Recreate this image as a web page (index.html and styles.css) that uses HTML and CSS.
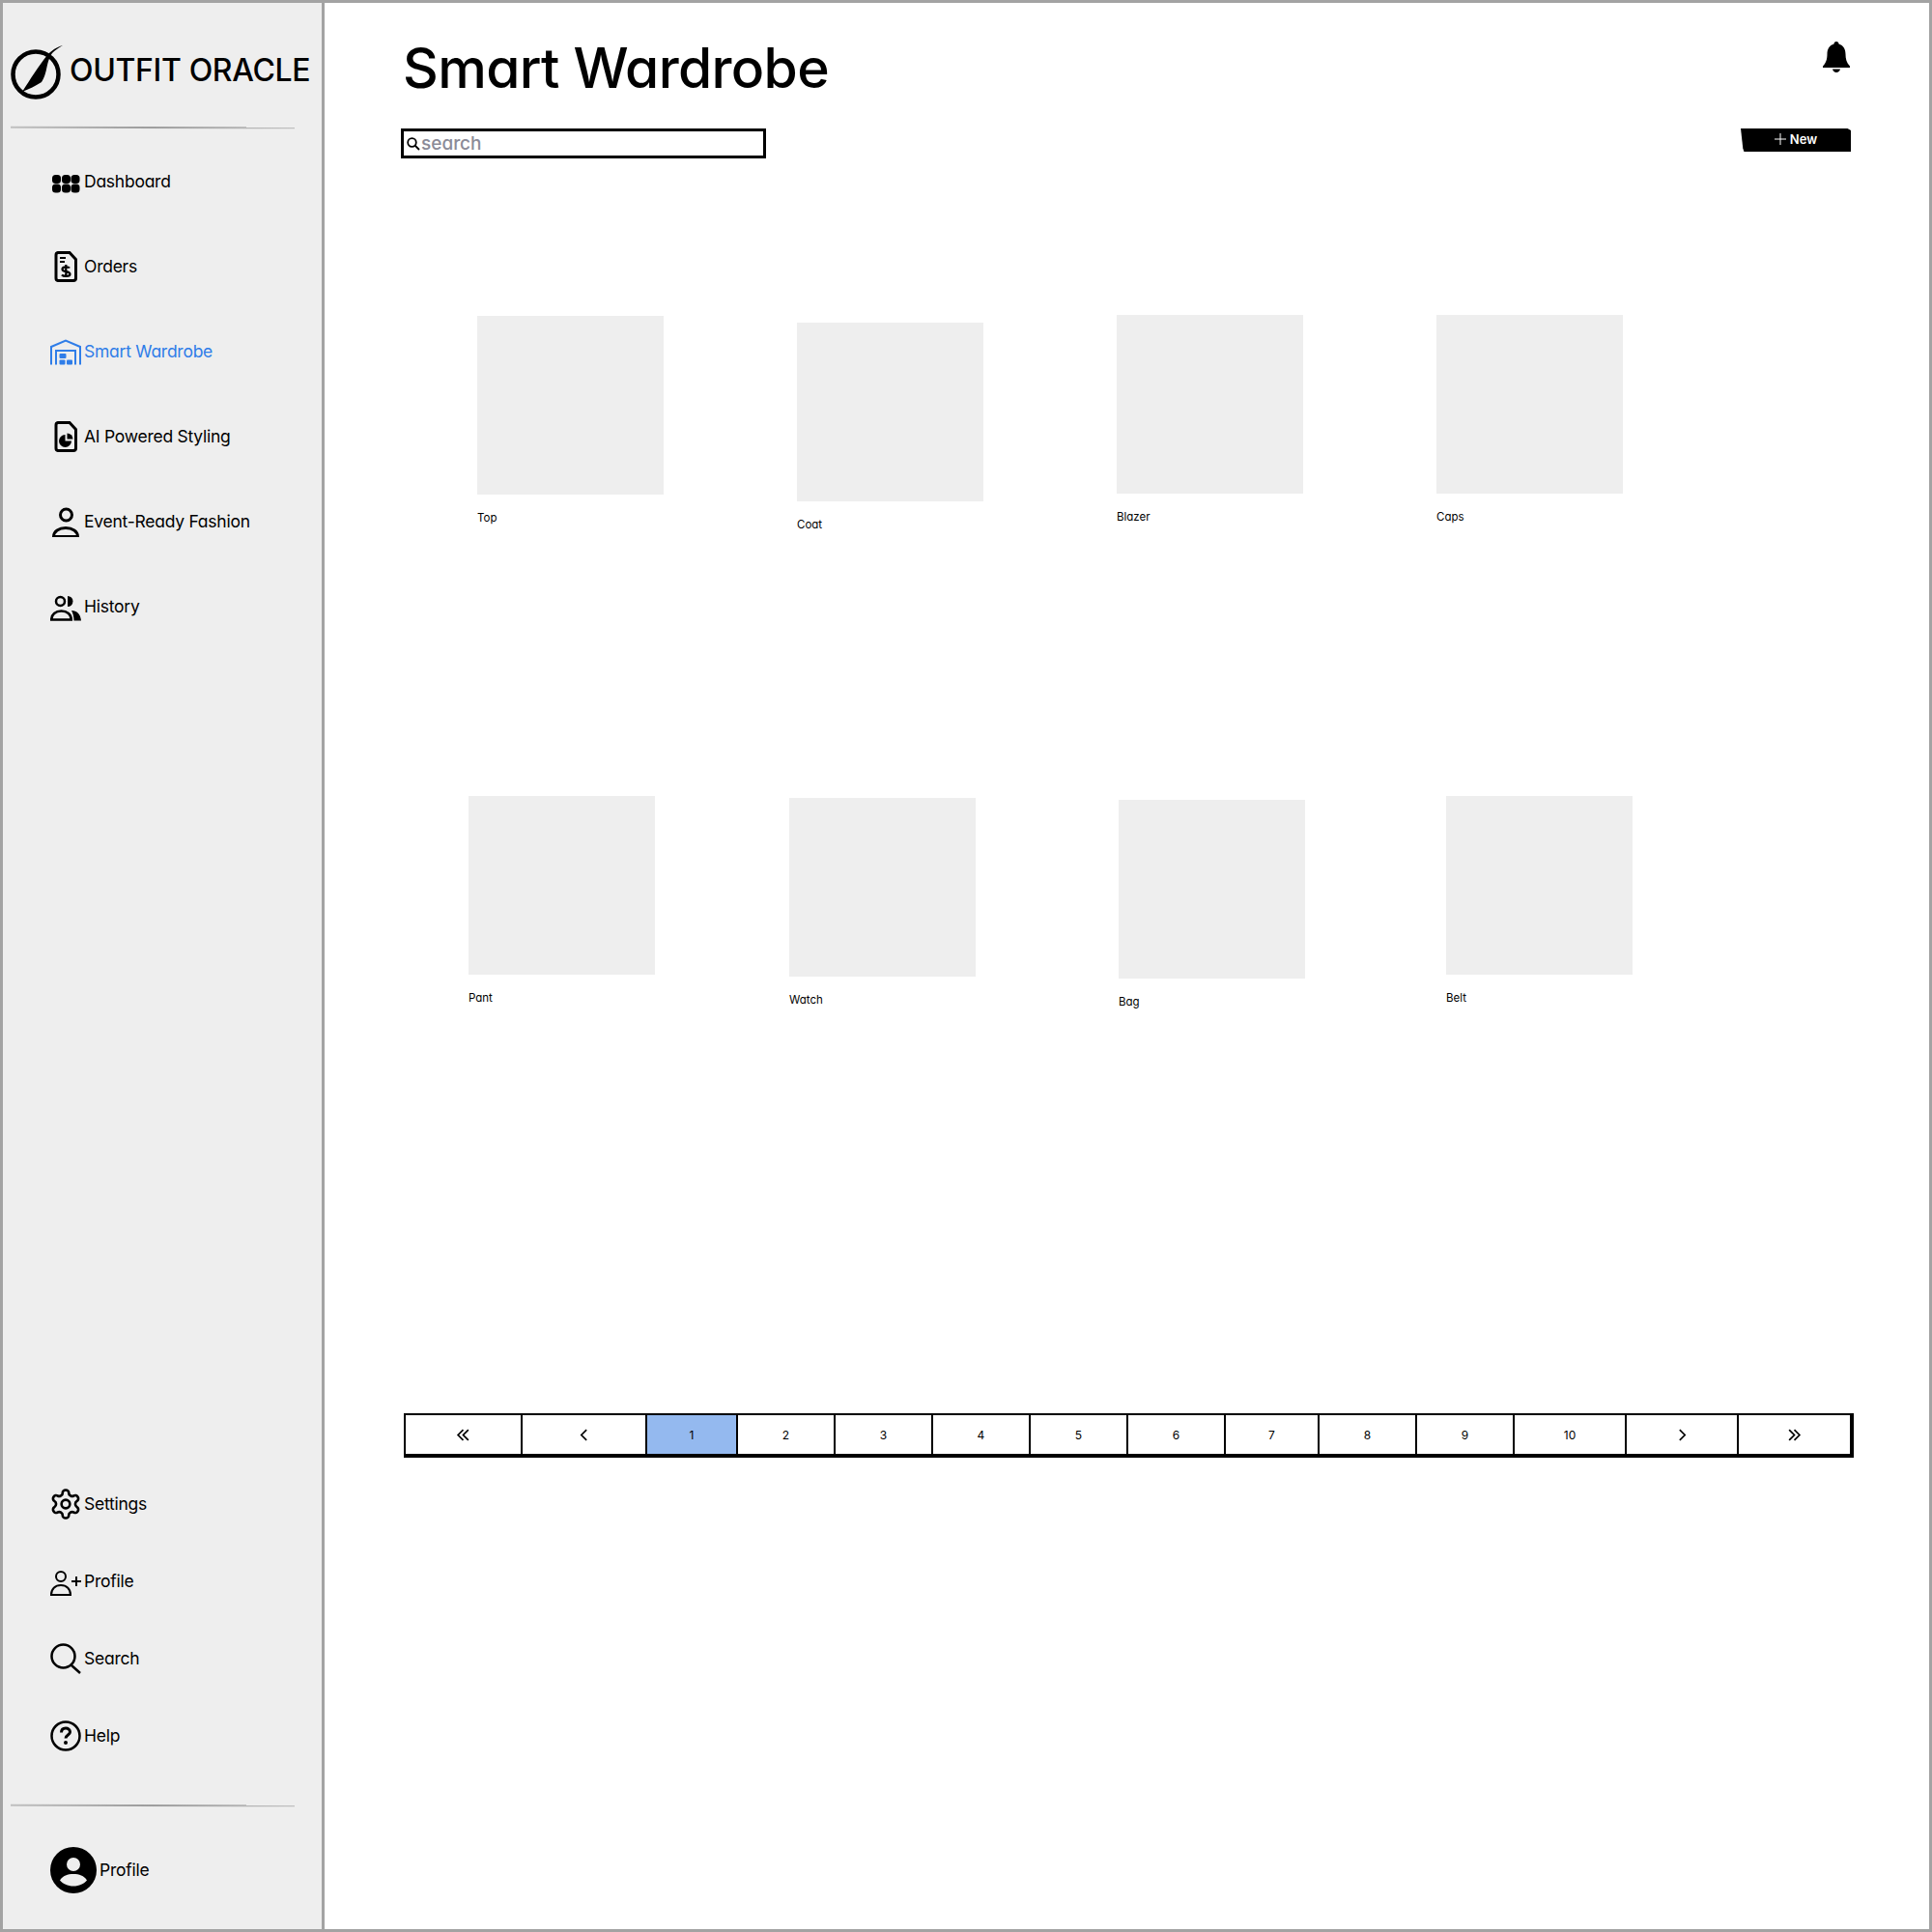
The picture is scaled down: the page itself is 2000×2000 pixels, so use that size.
FILE: index.html
```html
<!DOCTYPE html>
<html lang="en">
<head>
<meta charset="utf-8">
<title>Smart Wardrobe</title>
<link rel="stylesheet" href="styles.css">
</head>
<body>
<div class="app">
  <aside class="sidebar">
    <div class="brand">
      <svg class="logo" viewBox="0 0 54 58"><circle cx="26" cy="31" r="23.500" fill="none" stroke="currentColor" stroke-width="4.500"/><path d="M54 1C47 3 43 6 39 10C33 17 29 23 25 29C20 36 16 43 12 49C19 46 26 43 32 39C35 34 36 30 37 26C38 20 40 13 43 9C46 6 50 3 54 1Z" fill="currentColor"/></svg>
      <span class="brand-name">OUTFIT ORACLE</span>
    </div>
    <div class="rule"></div>
    <nav class="nav">
      <a class="nav-item"><svg class="icon" viewBox="0 0 32 32"><g fill="currentColor"><rect x="2" y="9" width="9" height="9" rx="3.500"/><rect x="12" y="9" width="9" height="9" rx="3.500"/><rect x="21.500" y="9" width="9" height="9" rx="3.500"/><rect x="2" y="18.500" width="9" height="9" rx="3.500"/><rect x="12" y="18.500" width="9" height="9" rx="3.500"/><rect x="21.500" y="18.500" width="9" height="9" rx="3.500"/></g></svg><span>Dashboard</span></a>
      <a class="nav-item"><svg class="icon" viewBox="0 0 32 32"><path d="M8 1.500H20L26.500 8.500V28A2.500 2.500 0 0 1 24 30.500H8A2.500 2.500 0 0 1 6 28V4A2.500 2.500 0 0 1 8 1.500Z" fill="none" stroke="currentColor" stroke-width="3"/><path d="M10 7h6M10 11h5" stroke="currentColor" stroke-width="2"/><path d="M20 17.500c-1-1.500-7.500-2-7.500 1.200 0 3.300 8 1.700 8 5 0 3-7 2.700-8.500.8M16.300 14v13" fill="none" stroke="currentColor" stroke-width="2.200"/></svg><span>Orders</span></a>
      <a class="nav-item nav-item-active"><svg class="icon" viewBox="0 0 32 32"><path d="M1 29.500V11L16 4.500L31 11V29.500" fill="none" stroke="currentColor" stroke-width="2"/><path d="M6 29.500V15H26V29.500" fill="none" stroke="currentColor" stroke-width="2"/><g fill="currentColor"><rect x="9.500" y="18" width="7" height="5" rx="1"/><rect x="9.500" y="24.500" width="6" height="5" rx="1"/><rect x="17" y="24.500" width="6" height="5" rx="1"/></g></svg><span>Smart Wardrobe</span></a>
      <a class="nav-item"><svg class="icon" viewBox="0 0 32 32"><path d="M8 1.500H20L26.500 8.500V28A2.500 2.500 0 0 1 24 30.500H8A2.500 2.500 0 0 1 6 28V4A2.500 2.500 0 0 1 8 1.500Z" fill="none" stroke="currentColor" stroke-width="3"/><path d="M15.500 14V20.500H22A6.500 6.500 0 1 1 15.500 14Z" fill="currentColor"/><path d="M17.500 12.500V18.500H23.500A6 6 0 0 0 17.500 12.500Z" fill="currentColor"/></svg><span>AI Powered Styling</span></a>
      <a class="nav-item"><svg class="icon" viewBox="0 0 32 32"><circle cx="16.500" cy="9" r="6" fill="none" stroke="currentColor" stroke-width="3"/><path d="M3.500 31.500C3.500 26 9 22.500 16 22.500S28.500 26 28.500 31.500Z" fill="none" stroke="currentColor" stroke-width="3"/></svg><span>Event-Ready Fashion</span></a>
      <a class="nav-item"><svg class="icon" viewBox="0 0 32 32"><circle cx="10.500" cy="10.500" r="4.500" fill="none" stroke="currentColor" stroke-width="2.500"/><path d="M18 5A5.500 5.500 0 0 1 18 16Z" fill="currentColor"/><path d="M1.200 29.500C1.200 24 5.500 20.500 11.500 20.500S21.800 24 21.800 29.500Z" fill="none" stroke="currentColor" stroke-width="2.500"/><path d="M22 20C27.500 20 31.500 24 32 30.500H24.500C24.500 26 23.500 23 22 20Z" fill="currentColor"/></svg><span>History</span></a>
    </nav>
    <nav class="nav nav-bottom">
      <a class="nav-item nav-item-short"><svg class="icon" viewBox="1 1 22 22" fill="none" stroke="currentColor" stroke-width="1.800"><path d="M12.220 2h-.44a2 2 0 0 0-2 2v.18a2 2 0 0 1-1 1.730l-.43.25a2 2 0 0 1-2 0l-.15-.08a2 2 0 0 0-2.730.73l-.22.38a2 2 0 0 0 .73 2.730l.15.1a2 2 0 0 1 1 1.720v.51a2 2 0 0 1-1 1.740l-.15.09a2 2 0 0 0-.73 2.730l.22.38a2 2 0 0 0 2.730.73l.15-.08a2 2 0 0 1 2 0l.43.25a2 2 0 0 1 1 1.730V20a2 2 0 0 0 2 2h.44a2 2 0 0 0 2-2v-.18a2 2 0 0 1 1-1.730l.43-.25a2 2 0 0 1 2 0l.15.08a2 2 0 0 0 2.730-.73l.22-.39a2 2 0 0 0-.73-2.730l-.15-.08a2 2 0 0 1-1-1.740v-.5a2 2 0 0 1 1-1.740l.15-.09a2 2 0 0 0 .73-2.730l-.22-.38a2 2 0 0 0-2.730-.73l-.15.08a2 2 0 0 1-2 0l-.43-.25a2 2 0 0 1-1-1.730V4a2 2 0 0 0-2-2z"/><circle cx="12" cy="12" r="3"/></svg><span>Settings</span></a>
      <a class="nav-item nav-item-short"><svg class="icon" viewBox="0 0 32 32" fill="none" stroke="currentColor" stroke-width="2"><circle cx="11" cy="11" r="5"/><path d="M1 30C1 24 5 20 11 20S21 24 21 30Z"/><path d="M22 16H32M27 11V21"/></svg><span>Profile</span></a>
      <a class="nav-item nav-item-short"><svg class="icon" viewBox="0 0 32 32" fill="none" stroke="currentColor" stroke-width="2.500"><circle cx="13.500" cy="13.500" r="12"/><path d="M21.500 22.500L31 31"/></svg><span>Search</span></a>
      <a class="nav-item nav-item-short"><svg class="icon" viewBox="0 0 32 32" fill="none" stroke="currentColor" stroke-width="2.500"><circle cx="16" cy="16" r="14.500"/><path d="M11.500 12.500C11.500 9.500 13.500 8 16 8S20.500 9.500 20.500 12C20.500 15 16 15 16 18.500" stroke-width="3"/><circle cx="16" cy="23" r="2" fill="currentColor" stroke="none"/></svg><span>Help</span></a>
    </nav>
    <div class="rule rule-lower"></div>
    <div class="account">
      <svg class="avatar" viewBox="0 0 48 48"><circle cx="24" cy="24" r="24" fill="currentColor"/><circle cx="24" cy="18" r="7" fill="#eeeeee"/><path d="M10 34.500C13 29.500 18 28 24 28S35 29.500 38 34.500C35 38 30 40.500 24 40.500S13 38 10 34.500Z" fill="#eeeeee"/></svg>
      <span>Profile</span>
    </div>
  </aside>
  <main class="main">
    <header class="header">
      <h1 class="title">Smart Wardrobe</h1>
      <svg class="bell" viewBox="0 0 28 32"><path d="M14 0C15.500 0 16.500 1 16.500 2.500C21.500 4 23.500 8 23.500 13C23.500 18 24.500 22 28 25.500V27H0V25.500C3.500 22 4.500 18 4.500 13C4.500 8 6.500 4 11.500 2.500C11.500 1 12.500 0 14 0Z" fill="currentColor"/><path d="M10 28.500H18C17.500 30.500 16 32 14 32S10.500 30.500 10 28.500Z" fill="currentColor"/></svg>
    </header>
    <div class="toolbar">
      <label class="search">
        <svg class="search-icon" viewBox="0 0 14 14" fill="none" stroke="currentColor" stroke-width="1.800"><circle cx="5.500" cy="5.500" r="4.300"/><path d="M8.500 8.500L13 13"/></svg>
        <span class="search-text">search</span>
      </label>
      <button class="new-button"><svg class="plus" viewBox="0 0 12 12" stroke="currentColor" stroke-width="1"><path d="M6 0V12M0 6H12"/></svg>New</button>
    </div>
    <section class="gallery">
      <div class="gallery-row">
        <figure class="card card-a1"><div class="thumb"></div><figcaption>Top</figcaption></figure>
        <figure class="card card-a2"><div class="thumb"></div><figcaption>Coat</figcaption></figure>
        <figure class="card card-a3"><div class="thumb"></div><figcaption>Blazer</figcaption></figure>
        <figure class="card card-a3"><div class="thumb"></div><figcaption>Caps</figcaption></figure>
      </div>
      <div class="gallery-row">
        <figure class="card card-b1"><div class="thumb"></div><figcaption>Pant</figcaption></figure>
        <figure class="card card-b2"><div class="thumb"></div><figcaption>Watch</figcaption></figure>
        <figure class="card card-b3"><div class="thumb"></div><figcaption>Bag</figcaption></figure>
        <figure class="card card-b4"><div class="thumb"></div><figcaption>Belt</figcaption></figure>
      </div>
    </section>
    <div class="pager">
      <a class="page"><svg class="chev" viewBox="0 0 14 12"><path d="M7 1L2 6L7 11M12 1L7 6L12 11"/></svg></a>
      <a class="page"><svg class="chev" viewBox="0 0 14 12"><path d="M9.500 1L4.500 6L9.500 11"/></svg></a>
      <a class="page page-active">1</a>
      <a class="page">2</a>
      <a class="page">3</a>
      <a class="page">4</a>
      <a class="page">5</a>
      <a class="page">6</a>
      <a class="page">7</a>
      <a class="page">8</a>
      <a class="page">9</a>
      <a class="page">10</a>
      <a class="page"><svg class="chev" viewBox="0 0 14 12"><path d="M4.500 1L9.500 6L4.500 11"/></svg></a>
      <a class="page"><svg class="chev" viewBox="0 0 14 12"><path d="M2 1L7 6L2 11M7 1L12 6L7 11"/></svg></a>
    </div>
  </main>
</div>
</body>
</html>
```
FILE: styles.css
```css
* { box-sizing: border-box; }
html, body { margin: 0; padding: 0; background: #fff; }
body {
  font-family: "Inter", "Lato", "Liberation Sans", sans-serif;
  font-feature-settings: "cv11" 1;
  color: #000;
}
.app {
  width: 2000px;
  height: 2000px;
  border: 3px solid #a3a3a3;
  display: flex;
}
.sidebar {
  width: 333px;
  flex: none;
  background: #eeeeee;
  border-right: 3px solid #a3a3a3;
  display: flex;
  flex-direction: column;
}
.brand {
  height: 128px;
  padding: 43px 0 0 8px;
  display: flex;
  align-items: flex-start;
  gap: 7px;
}
.logo { width: 54px; height: 58px; flex: none; }
.brand-name {
  font-size: 32px;
  line-height: 36px;
  margin-top: 9px;
  white-space: nowrap;
  letter-spacing: -0.35px;
  font-weight: 500;
}
.rule {
  width: 294px;
  height: 2px;
  margin-left: 8px;
  background: linear-gradient(90deg, #c0c0c0, #9c9c9c 50%, #c0c0c0);
  transform: rotate(0.12deg);
  flex: none;
}
.nav { display: flex; flex-direction: column; padding-top: 11px; }
.nav-bottom { margin-top: auto; padding-top: 0; }
.nav-item {
  height: 88px;
  padding-left: 49px;
  padding-bottom: 1px;
  display: flex;
  align-items: center;
  gap: 3px;
  font-size: 17.500px;
  color: #000;
  letter-spacing: -0.25px;
}
.nav-item-short { height: 80px; }
.nav-item-active { color: #2f7de8; }
.icon { width: 32px; height: 32px; flex: none; }
.rule-lower { margin-top: 31px; }
.account {
  height: 127px;
  padding: 42px 0 0 49px;
  display: flex;
  align-items: flex-start;
  gap: 3px;
  font-size: 17.500px;
  letter-spacing: -0.25px;
}
.account span { line-height: 47px; }
.avatar { width: 48px; height: 48px; flex: none; }
.main {
  flex: 1;
  min-width: 0;
  padding: 0 80px 0 82px;
  display: flex;
  flex-direction: column;
}
.header {
  height: 130px;
  flex: none;
  display: flex;
  align-items: flex-start;
  justify-content: space-between;
}
.title {
  margin: 33px 0 0 -1px;
  font-size: 57px;
  line-height: 70px;
  font-weight: 500;
  letter-spacing: -0.65px;
}
.bell { width: 28px; height: 32px; margin: 40px 2px 0 0; flex: none; }
.toolbar {
  flex: none;
  height: 31px;
  display: flex;
  justify-content: space-between;
  align-items: flex-start;
}
.search {
  width: 378px;
  height: 31px;
  margin-left: -3px;
  border: 3px solid #000;
  display: flex;
  align-items: center;
  gap: 1px;
  padding-left: 3px;
  background: #fff;
}
.search-icon { width: 14px; height: 14px; flex: none; }
.search-text { font-size: 19px; font-weight: 500; color: #8b8b98; line-height: 25px; }
.new-button {
  width: 114px;
  height: 24px;
  margin-right: 1px;
  border: 0;
  padding: 0 0 2px;
  background: #000;
  color: #fff;
  font: inherit;
  font-feature-settings: inherit;
  font-size: 13px;
  font-weight: 600;
  display: flex;
  align-items: center;
  justify-content: center;
  gap: 4px;
  clip-path: polygon(0 0, 97% 0, 100% 8%, 100% 100%, 3% 100%, 2% 85%);
}
.plus { width: 12px; height: 12px; flex: none; }
.gallery { flex: none; height: 1137px; margin-top: 162px; }
.gallery-row { display: flex; align-items: flex-start; height: 498px; }
.card { margin: 0; width: 193px; flex: none; }
.thumb { width: 193px; height: 185px; background: #eeeeee; }
.card figcaption { font-size: 11.500px; line-height: 16px; margin-top: 16px; }
.card-a1 { margin-left: 76px; margin-top: 1px; }
.card-a2 { margin-left: 138px; margin-top: 8px; }
.card-a3 { margin-left: 138px; }
.card-b1 { margin-left: 67px; }
.card-b2 { margin-left: 139px; margin-top: 2px; }
.card-b3 { margin-left: 148px; margin-top: 4px; }
.card-b4 { margin-left: 146px; }
.pager {
  flex: none;
  width: 1501px;
  height: 46px;
  display: grid;
  grid-template-columns: 121px 129px 94px 101px 101px 101px 101px 101px 97px 101px 101px 116px 116px 1fr;
  border-style: solid;
  border-color: #000;
  border-width: 2px 4px 4px 2px;
}
.page {
  display: flex;
  align-items: center;
  justify-content: center;
  border-right: 2px solid #000;
  font-size: 12px;
}
.page:last-child { border-right: 0; }
.page-active { background: #94b9ef; }
.chev { width: 15px; height: 13px; fill: none; stroke: currentColor; stroke-width: 1.600; }
```
